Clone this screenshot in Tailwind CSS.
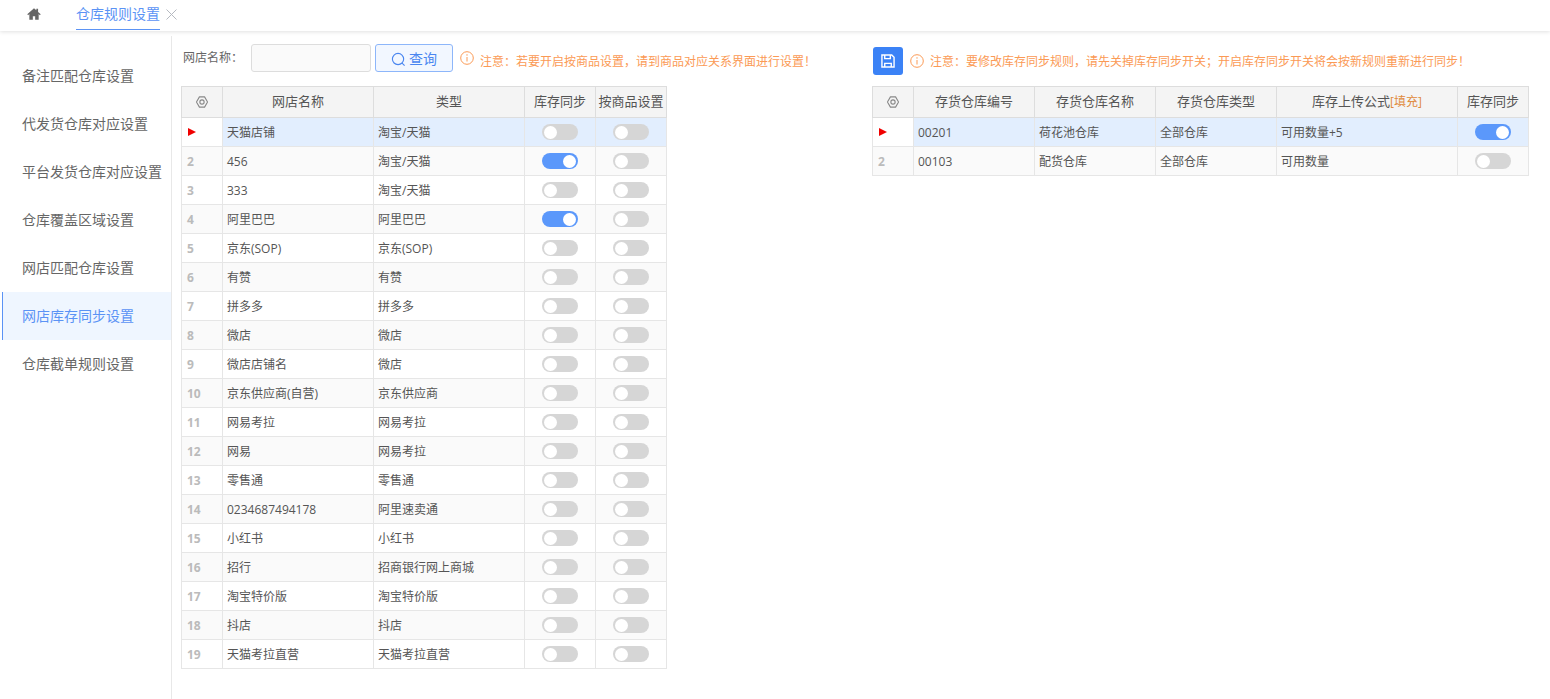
<!DOCTYPE html>
<html lang="zh-CN">
<head>
  <meta charset="UTF-8" />
  <title>仓库规则设置</title>
  <script src="https://cdn.jsdelivr.net/npm/@tailwindcss/browser@4"></script>
</head>
<body class="bg-white h-[699px] overflow-hidden text-[#555] text-xs font-['Open_Sans','Noto_Sans_CJK_SC',sans-serif]">

  <!-- tab bar -->
  <div class="h-[31px] flex items-start bg-white shadow-[0_1px_4px_rgba(0,0,0,0.12)] relative">
    <div class="w-[68px] h-[28px] flex items-center justify-center">
      <svg class="w-[14px] h-[14px] text-[#666]" viewBox="0 0 24 24" fill="currentColor"><path d="M12 2 0.5 12.5 2 14l2-1.800V22h6v-6h4v6h6v-9.800L22 14l1.500-1.500L19 8.400V3h-3v2.700z"/></svg>
    </div>
    <div class="ml-2 h-[30px] w-[84px] border-b border-[#5b93f5] text-sm text-[#5b93f5] leading-[27px] whitespace-nowrap">仓库规则设置</div>
    <svg class="w-[11px] h-[11px] ml-[6px] mt-[9px] text-[#b5b9c0]" viewBox="0 0 11 11" fill="none" stroke="currentColor" stroke-width="1"><path d="M0.500 0.500 10.500 10.500M10.500 0.500 0.500 10.500"/></svg>
  </div>

  <div class="flex">
    <!-- side menu -->
    <div class="w-[172px] h-[663px] mt-[5px] pt-4 pl-[2px] border-r border-[#e8e8e8] shrink-0 text-sm text-[#666]">
      <div class="h-12 pl-5 flex items-center">备注匹配仓库设置</div>
      <div class="h-12 pl-5 flex items-center">代发货仓库对应设置</div>
      <div class="h-12 pl-5 flex items-center">平台发货仓库对应设置</div>
      <div class="h-12 pl-5 flex items-center">仓库覆盖区域设置</div>
      <div class="h-12 pl-5 flex items-center">网店匹配仓库设置</div>
      <div class="h-12 pl-[19px] flex items-center bg-[#eff6ff] border-l border-[#5b93f5] text-[#5b93f5]">网店库存同步设置</div>
      <div class="h-12 pl-5 flex items-center">仓库截单规则设置</div>
    </div>

    <!-- left panel -->
    <div class="w-[495px] ml-[9px] shrink-0">
      <div class="h-[55px] flex items-start pt-[13px]">
        <span class="ml-[2px] w-[68px] h-7 leading-7 text-[#666] shrink-0 whitespace-nowrap">网店名称：</span>
        <input type="text" class="w-[120px] h-7 bg-[#fafafa] border border-[#ddd] rounded-[3px] shrink-0" />
        <button class="ml-[4px] w-[78px] h-7 pt-[2px] flex items-center justify-center gap-[3px] bg-[#f2f7ff] border border-[#8db6fa] rounded-[3px] text-sm text-[#4a86f0] shrink-0 whitespace-nowrap">
          <svg class="w-[15px] h-[15px] shrink-0" viewBox="0 0 16 16" fill="none" stroke="currentColor" stroke-width="1.200"><circle cx="7.500" cy="7.500" r="6"/><path d="M11.800 11.800 14.500 14.500"/></svg>
          查询
        </button>
        <svg class="w-[14px] h-[14px] ml-[7px] mt-[7px] text-[#fb9a55] shrink-0" viewBox="0 0 14 14" fill="none" stroke="currentColor"><circle cx="7" cy="7" r="6.300"/><path d="M7 6v4.500M7 3.200v1.500"/></svg>
        <span class="ml-[6px] h-7 leading-[35px] text-[#fb9a55] whitespace-nowrap shrink-0">注意：若要开启按商品设置，请到商品对应关系界面进行设置！</span>
      </div>
      <table class="table-fixed border-collapse w-[486px]">
        <colgroup><col class="w-[41px]" /><col class="w-[151px]" /><col class="w-[151px]" /><col class="w-[71px]" /><col class="w-[71px]" /></colgroup>
        <thead>
          <tr class="h-[31px] bg-[#f4f4f4] text-[13px] font-normal">
            <th class="border border-[#ddd] font-normal"><svg class="w-[12px] h-[12px] mx-auto text-[#888]" viewBox="0 0 14 14" fill="none" stroke="currentColor" stroke-width="1.300" stroke-linejoin="round"><path d="M4 1h6l3.500 6L10 13H4L0.500 7z"/><circle cx="7" cy="7" r="2.500"/></svg></th>
            <th class="border border-[#ddd] font-normal">网店名称</th>
            <th class="border border-[#ddd] font-normal">类型</th>
            <th class="border border-[#ddd] font-normal">库存同步</th>
            <th class="border border-[#ddd] font-normal whitespace-nowrap">按商品设置</th>
          </tr>
        </thead>
        <tbody id="shopRows"></tbody>
      </table>
    </div>

    <!-- right panel -->
    <div class="w-[660px] ml-[196px] shrink-0">
      <div class="h-[55px] flex items-start pt-[16px]">
        <div class="ml-px w-[30px] h-[28px] rounded-[3px] bg-[#3b82f6] flex items-center justify-center shrink-0">
          <svg class="w-[14px] h-[14px] text-white" viewBox="0 0 15 15" fill="none" stroke="currentColor" stroke-width="1.500"><path d="M1 1h10.500L14 3.500V14H1z"/><path d="M4 1v4h6V1M4 14v-4h7v4"/></svg>
        </div>
        <svg class="w-[14px] h-[14px] ml-[7px] mt-[7px] text-[#fb9a55] shrink-0" viewBox="0 0 14 14" fill="none" stroke="currentColor"><circle cx="7" cy="7" r="6.300"/><path d="M7 6v4.500M7 3.200v1.500"/></svg>
        <span class="ml-[6px] h-7 leading-[29px] text-[#fb9a55] whitespace-nowrap shrink-0">注意：要修改库存同步规则，请先关掉库存同步开关；开启库存同步开关将会按新规则重新进行同步！</span>
      </div>
      <table class="table-fixed border-collapse w-[656px]">
        <colgroup><col class="w-[41px]" /><col class="w-[121px]" /><col class="w-[121px]" /><col class="w-[121px]" /><col class="w-[181px]" /><col class="w-[71px]" /></colgroup>
        <thead>
          <tr class="h-[31px] bg-[#f4f4f4] text-[13px]">
            <th class="border border-[#ddd] font-normal"><svg class="w-[12px] h-[12px] mx-auto text-[#888]" viewBox="0 0 14 14" fill="none" stroke="currentColor" stroke-width="1.300" stroke-linejoin="round"><path d="M4 1h6l3.500 6L10 13H4L0.500 7z"/><circle cx="7" cy="7" r="2.500"/></svg></th>
            <th class="border border-[#ddd] font-normal">存货仓库编号</th>
            <th class="border border-[#ddd] font-normal">存货仓库名称</th>
            <th class="border border-[#ddd] font-normal">存货仓库类型</th>
            <th class="border border-[#ddd] font-normal">库存上传公式<span class="text-xs text-[#e08a3c]">[填充]</span></th>
            <th class="border border-[#ddd] font-normal">库存同步</th>
          </tr>
        </thead>
        <tbody id="stockRows"></tbody>
      </table>
    </div>
  </div>

  <script>
    const shops = [
      ["天猫店铺", "淘宝/天猫", 0], ["456", "淘宝/天猫", 1], ["333", "淘宝/天猫", 0], ["阿里巴巴", "阿里巴巴", 1],
      ["京东(SOP)", "京东(SOP)", 0], ["有赞", "有赞", 0], ["拼多多", "拼多多", 0], ["微店", "微店", 0],
      ["微店店铺名", "微店", 0], ["京东供应商(自营)", "京东供应商", 0], ["网易考拉", "网易考拉", 0], ["网易", "网易考拉", 0],
      ["零售通", "零售通", 0], ["0234687494178", "阿里速卖通", 0], ["小红书", "小红书", 0], ["招行", "招商银行网上商城", 0],
      ["淘宝特价版", "淘宝特价版", 0], ["抖店", "抖店", 0], ["天猫考拉直营", "天猫考拉直营", 0]
    ];
    const stocks = [
      ["00201", "荷花池仓库", "全部仓库", "可用数量+5", 1],
      ["00103", "配货仓库", "全部仓库", "可用数量", 0]
    ];

    function toggle(on) {
      if (on) return `<div class="w-9 h-4 mx-auto rounded-full bg-[#5b98fb] flex items-center justify-end pr-[2px]"><div class="w-[13px] h-[13px] rounded-full bg-white"></div></div>`;
      return `<div class="w-9 h-4 mx-auto rounded-full bg-[#d6d6d6] flex items-center pl-[2px]"><div class="w-[13px] h-[13px] rounded-full bg-white"></div></div>`;
    }

    function rowClass(i) {
      if (i === 0) return "h-[29px] bg-[#e2eefe]";
      return i % 2 ? "h-[29px] bg-[#fafafa]" : "h-[29px] bg-white";
    }

    function indexCell(i) {
      if (i === 0) return `<td class="border border-[#e6e6e6] bg-white pl-[6px] align-middle"><div class="w-0 h-0 border-y-[4px] border-y-transparent border-l-[8px] border-l-[#f00000]"></div></td>`;
      return `<td class="border border-[#e6e6e6] pl-[5px] pt-[2px] font-bold text-[#bbb]">${i + 1}</td>`;
    }

    const cell = "border border-[#e6e6e6] pl-1 pt-[2px] truncate";

    document.getElementById("shopRows").innerHTML = shops.map((s, i) => `
      <tr class="${rowClass(i)}">
        ${indexCell(i)}
        <td class="${cell}">${s[0]}</td>
        <td class="${cell}">${s[1]}</td>
        <td class="border border-[#e6e6e6]">${toggle(s[2])}</td>
        <td class="border border-[#e6e6e6]">${toggle(0)}</td>
      </tr>`).join("");

    document.getElementById("stockRows").innerHTML = stocks.map((s, i) => `
      <tr class="${rowClass(i)}">
        ${indexCell(i)}
        <td class="${cell}">${s[0]}</td>
        <td class="${cell}">${s[1]}</td>
        <td class="${cell}">${s[2]}</td>
        <td class="${cell}">${s[3]}</td>
        <td class="border border-[#e6e6e6]">${toggle(s[4])}</td>
      </tr>`).join("");
  </script>
</body>
</html>
